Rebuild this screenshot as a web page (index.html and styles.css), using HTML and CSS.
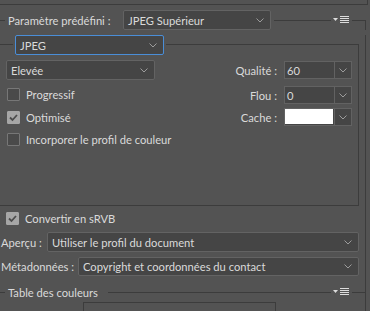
FILE: index.html
```html
<!DOCTYPE html>
<html lang="fr">
<head>
  <meta charset="UTF-8" />
  <meta name="viewport" content="width=device-width, initial-scale=1.0"/>
  <title>Enregistrer pour le Web</title>
  <link rel="stylesheet" href="styles.css">
</head>
<body>
  <div class="edge"></div>

  <div class="panel">
    <!-- Paramètre prédéfini -->
    <div class="head">
      <span class="rule rule-start"></span>
      <span class="head-label preset-label">Paramètre prédéfini :</span>
      <div class="select select-preset">
        <span>JPEG Supérieur</span>
        <svg class="chevron" width="8" height="5" viewBox="0 0 8 5"><polyline points="0.5,0.5 4,4 7.5,0.5" /></svg>
      </div>
      <span class="rule rule-fill"></span>
      <svg class="menu-icon" width="16" height="8" viewBox="0 0 16 8">
        <polygon points="0,2 5,2 2.5,5" />
        <rect x="7" y="0" width="9" height="1" />
        <rect x="7" y="2" width="9" height="1" />
        <rect x="7" y="4" width="9" height="1" />
        <rect x="7" y="6" width="9" height="1" />
      </svg>
      <span class="rule rule-end"></span>
    </div>

    <div class="panel-body">
      <div class="group">
        <div class="head head-format">
          <span class="rule rule-start-wide"></span>
          <div class="select select-format">
            <span>JPEG</span>
            <svg class="chevron" width="8" height="5" viewBox="0 0 8 5"><polyline points="0.5,0.5 4,4 7.5,0.5" /></svg>
          </div>
          <span class="rule rule-corner"></span>
        </div>

        <div class="group-body">
          <div class="col-left">
            <div class="select select-quality">
              <span>Elevée</span>
              <svg class="chevron" width="8" height="5" viewBox="0 0 8 5"><polyline points="0.5,0.5 4,4 7.5,0.5" /></svg>
            </div>
            <label class="check check-progressive"><span class="box"></span>Progressif</label>
            <label class="check check-optimized"><span class="box checked"><svg width="11" height="11" viewBox="0 0 11 11"><polyline points="2,5.5 4.5,8 9,3" /></svg></span>Optimisé</label>
            <label class="check check-profile"><span class="box"></span>Incorporer le profil de couleur</label>
          </div>

          <div class="col-right">
            <div class="combo-row">
              <span class="combo-label">Qualité :</span>
              <div class="combo">
                <span class="combo-field">60</span>
                <span class="combo-btn"><svg class="chevron" width="8" height="5" viewBox="0 0 8 5"><polyline points="0.5,0.5 4,4 7.5,0.5" /></svg></span>
              </div>
            </div>
            <div class="combo-row row-blur">
              <span class="combo-label">Flou :</span>
              <div class="combo">
                <span class="combo-field">0</span>
                <span class="combo-btn"><svg class="chevron" width="8" height="5" viewBox="0 0 8 5"><polyline points="0.5,0.5 4,4 7.5,0.5" /></svg></span>
              </div>
            </div>
            <div class="combo-row row-matte">
              <span class="combo-label">Cache :</span>
              <div class="combo">
                <span class="combo-field swatch"></span>
                <span class="combo-btn"><svg class="chevron" width="8" height="5" viewBox="0 0 8 5"><polyline points="0.5,0.5 4,4 7.5,0.5" /></svg></span>
              </div>
            </div>
          </div>
        </div>
      </div>

      <label class="check check-srgb"><span class="box checked"><svg width="11" height="11" viewBox="0 0 11 11"><polyline points="2,5.5 4.5,8 9,3" /></svg></span>Convertir en sRVB</label>

      <div class="field-row row-preview">
        <span class="field-label">Aperçu :</span>
        <div class="select select-preview">
          <span>Utiliser le profil du document</span>
          <svg class="chevron" width="8" height="5" viewBox="0 0 8 5"><polyline points="0.5,0.5 4,4 7.5,0.5" /></svg>
        </div>
      </div>
      <div class="field-row row-meta">
        <span class="field-label">Métadonnées :</span>
        <div class="select select-meta">
          <span>Copyright et coordonnées du contact</span>
          <svg class="chevron" width="8" height="5" viewBox="0 0 8 5"><polyline points="0.5,0.5 4,4 7.5,0.5" /></svg>
        </div>
      </div>

      <!-- Table des couleurs -->
      <div class="head head-table">
        <span class="rule rule-start"></span>
        <span class="head-label table-label">Table des couleurs</span>
        <span class="rule rule-fill"></span>
        <svg class="menu-icon" width="16" height="8" viewBox="0 0 16 8">
          <polygon points="0,2 5,2 2.5,5" />
          <rect x="7" y="0" width="9" height="1" />
          <rect x="7" y="2" width="9" height="1" />
          <rect x="7" y="4" width="9" height="1" />
          <rect x="7" y="6" width="9" height="1" />
        </svg>
        <span class="rule rule-end-open"></span>
      </div>
      <div class="color-table"></div>
    </div>
  </div>
</body>
</html>
```

FILE: styles.css
```css
body {
  margin: 0;
  background-color: #535353;
  font-family: Lato, 'Liberation Sans', sans-serif;
  font-size: 11.2px;
  color: #dadada;
  width: 370px;
  height: 311px;
  overflow: hidden;
}
.edge {
  width: 367px;
  height: 4px;
  border-bottom: 1px solid #3c3c3c;
  border-right: 1px solid #3c3c3c;
}
.panel {
  width: 366px;
  margin-top: 5px;
}
.head {
  display: flex;
  align-items: center;
  height: 20px;
}
.rule {
  flex: none;
  align-self: flex-start;
  height: 10px;
  border-bottom: 1px solid #3c3c3c;
}
.rule-start {
  width: 5px;
  margin-right: 3px;
}
.rule-fill {
  flex: 1;
}
.rule-end {
  align-self: flex-end;
  height: 9px;
  width: 13px;
  margin-left: 3px;
  border-bottom: none;
  border-top: 1px solid #3c3c3c;
  border-right: 1px solid #3c3c3c;
}
.rule-end-open {
  width: 13px;
  margin-left: 3px;
}
.head-label {
  flex: none;
  white-space: nowrap;
}
.preset-label {
  width: 115px;
}
.menu-icon {
  flex: none;
  margin-left: 2px;
  fill: #dcdcdc;
}
.select {
  flex: none;
  box-sizing: border-box;
  height: 20px;
  display: flex;
  align-items: center;
  justify-content: space-between;
  padding: 0 6px 0 4px;
  background-color: #454545;
  border: 1px solid #636363;
  border-radius: 2px;
  white-space: nowrap;
}
.chevron {
  flex: none;
  fill: none;
  stroke: #9c9c9c;
  stroke-width: 1;
}
.select-preset {
  width: 148px;
}
.rule-fill:nth-child(4) {
  margin-left: 3px;
}
.panel-body {
  border-right: 1px solid #3c3c3c;
  height: 281px;
}

/* JPEG group */
.group {
  width: 359px;
  margin-top: 5px;
}
.head-format .rule-start-wide {
  width: 13px;
  height: 9px;
  margin-right: 2px;
}
.select-format {
  width: 149px;
  border-color: #4a8ed8;
}
.rule-corner {
  flex: 1;
  align-self: flex-end;
  height: 10px;
  margin-left: 2px;
  border-bottom: none;
  border-top: 1px solid #3c3c3c;
  border-right: 1px solid #3c3c3c;
}
.group-body {
  display: flex;
  justify-content: space-between;
  height: 150px;
  border-right: 1px solid #3c3c3c;
  border-bottom: 1px solid #3c3c3c;
}
.col-left {
  padding-left: 6px;
  padding-top: 5px;
}
.select-quality {
  width: 149px;
}
.check {
  display: flex;
  align-items: center;
  gap: 6px;
  height: 13px;
  white-space: nowrap;
}
.col-left .check {
  padding-left: 1px;
}
.check-progressive {
  margin-top: 8px;
}
.check-optimized {
  margin-top: 10px;
}
.check-profile {
  margin-top: 9px;
}
.box {
  flex: none;
  box-sizing: border-box;
  width: 13px;
  height: 13px;
  border: 1px solid #777777;
  background-color: #4a4a4a;
  border-radius: 1px;
  display: flex;
  align-items: center;
  justify-content: center;
}
.box.checked {
  background-color: #a6a6a6;
  border-color: #a6a6a6;
}
.box svg {
  fill: none;
  stroke: #4c4c4c;
  stroke-width: 1.8;
}
.col-right {
  display: flex;
  flex-direction: column;
  align-items: flex-end;
  padding-right: 6px;
  padding-top: 6px;
}
.combo-row {
  display: flex;
  align-items: center;
  gap: 7px;
  height: 18px;
}
.row-blur {
  margin-top: 7px;
}
.row-matte {
  margin-top: 4px;
}
.combo {
  box-sizing: border-box;
  width: 68px;
  height: 18px;
  display: flex;
  border: 1px solid #626262;
  background-color: #454545;
}
.combo-field {
  flex: 1;
  display: flex;
  align-items: center;
  padding-left: 2px;
}
.combo-field.swatch {
  background-color: #ffffff;
  margin: 0 1px 1px 0;
}
.combo-btn {
  flex: none;
  width: 16px;
  border-left: 1px solid #626262;
  display: flex;
  align-items: center;
  justify-content: center;
}

/* below the group */
.check-srgb {
  margin-top: 6px;
  margin-left: 6px;
}
.field-row {
  display: flex;
  align-items: center;
  justify-content: space-between;
  padding-left: 1px;
  padding-right: 6px;
}
.field-label {
  white-space: nowrap;
}
.row-preview {
  margin-top: 7px;
}
.row-meta {
  margin-top: 5px;
}
.select-preview {
  width: 312px;
}
.select-meta {
  width: 281px;
  height: 19px;
}
.head-table {
  margin-top: 6px;
}
.table-label {
  width: 100px;
}
.color-table {
  box-sizing: border-box;
  width: 193px;
  height: 20px;
  margin-left: 83px;
  border: 1px solid #3c3c3c;
}
```
